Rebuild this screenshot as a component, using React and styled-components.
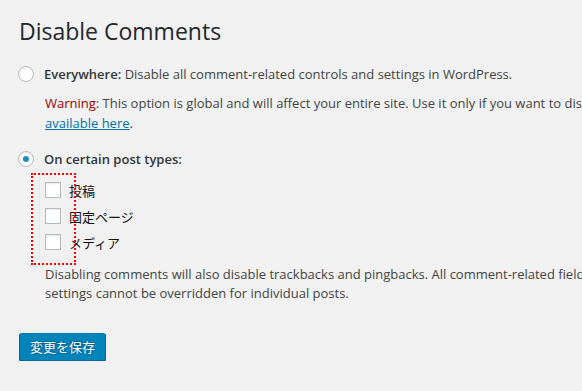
import styled, { createGlobalStyle } from "styled-components";

const Global = createGlobalStyle`
  html, body {
    margin: 0;
    background: #f1f1f1;
    overflow: hidden;
  }
  body {
    font-family: "Open Sans", "Noto Sans CJK JP", sans-serif;
    font-size: 13px;
    color: #444;
  }
`;

const postTypes = ["投稿", "固定ページ", "メディア"];

const App = () => {
  return <Wrap>
    <Global />
    <Title>Disable Comments</Title>

    <RadioRow>
      <Radio type="radio" name="mode" />
      <span><strong>Everywhere:</strong> Disable all comment-related controls and settings in WordPress.</span>
    </RadioRow>

    <Indent>
      <Warning>
        <b>Warning</b>: This option is global and will affect your entire site. Use it only if you want to disable comments everywhere. A complete description of what this option does is<br />
        <a href="#">available here</a>.
      </Warning>
    </Indent>

    <RadioRow $gap={16}>
      <Radio type="radio" name="mode" defaultChecked />
      <strong>On certain post types:</strong>
    </RadioRow>

    <Indent>
      <CheckList>
        {postTypes.map((t) => (
          <li key={t}>
            <Check type="checkbox" />
            <span>{t}</span>
          </li>
        ))}
        <Marker />
      </CheckList>

      <Note>
        Disabling comments will also disable trackbacks and pingbacks. All comment-related fields will also be hidden from the edit/quick-edit screens of the affected posts. These<br />
        settings cannot be overridden for individual posts.
      </Note>
    </Indent>

    <SaveButton type="button">変更を保存</SaveButton>
  </Wrap>;
};

const Wrap = styled.div`
  padding: 17px 0 0 18px;
  white-space: nowrap;

  strong {
    font-weight: 600;
    color: #32373c;
  }
`;

const Title = styled.h1`
  margin: 0;
  font-size: 23px;
  line-height: 29px;
  font-weight: 400;
  color: #23282d;
  padding-left: 1px;
`;

const RadioRow = styled.label`
  display: flex;
  align-items: center;
  height: 20px;
  margin-top: ${({ $gap }) => $gap || 18}px;
  line-height: 20px;
`;

const Radio = styled.input`
  appearance: none;
  box-sizing: border-box;
  width: 16px;
  height: 16px;
  margin: 0 10px 0 0;
  border: 1px solid #b4b9be;
  border-radius: 50%;
  background: #fff;
  box-shadow: inset 0 1px 2px rgba(0, 0, 0, 0.07);
  display: grid;
  place-items: center;

  &:checked::before {
    content: "";
    width: 6px;
    height: 6px;
    border-radius: 50%;
    background: #1e8cbe;
  }
`;

const Indent = styled.div`
  margin-left: 27px;
`;

const Warning = styled.p`
  margin: 10px 0 0;
  line-height: 19.5px;

  b {
    font-weight: 400;
    color: #990000;
  }

  a {
    color: #0073aa;
    text-decoration: underline;
  }
`;

const CheckList = styled.ul`
  position: relative;
  list-style: none;
  margin: 8px 0 0;
  padding: 0;

  li {
    display: flex;
    align-items: center;
    height: 26px;
    gap: 8px;
    font-family: "Noto Sans CJK JP", sans-serif;
    font-size: 13px;
    color: #111;
  }
`;

const Check = styled.input`
  appearance: none;
  box-sizing: border-box;
  width: 16px;
  height: 16px;
  margin: 0;
  border: 1px solid #b4b9be;
  background: #fff;
  box-shadow: inset 0 1px 2px rgba(0, 0, 0, 0.1);
`;

const Marker = styled.span`
  position: absolute;
  left: -14px;
  top: -4px;
  width: 41px;
  height: 88px;
  border: 2px dotted #f00;
  pointer-events: none;
`;

const Note = styled.p`
  margin: 10px 0 0;
  line-height: 19px;
`;

const SaveButton = styled.button`
  margin: 30px 0 0 1px;
  height: 28px;
  padding: 0 10px 1px;
  font-family: "Noto Sans CJK JP", sans-serif;
  font-size: 13px;
  color: #fff;
  background: #0085ba;
  border: 1px solid;
  border-color: #0073aa #006799 #006799;
  border-radius: 3px;
  box-shadow: 0 1px 0 #006799;
  text-shadow: 0 -1px 1px #006799, 1px 0 1px #006799, 0 1px 1px #006799, -1px 0 1px #006799;
  cursor: pointer;
`;

export default App;
